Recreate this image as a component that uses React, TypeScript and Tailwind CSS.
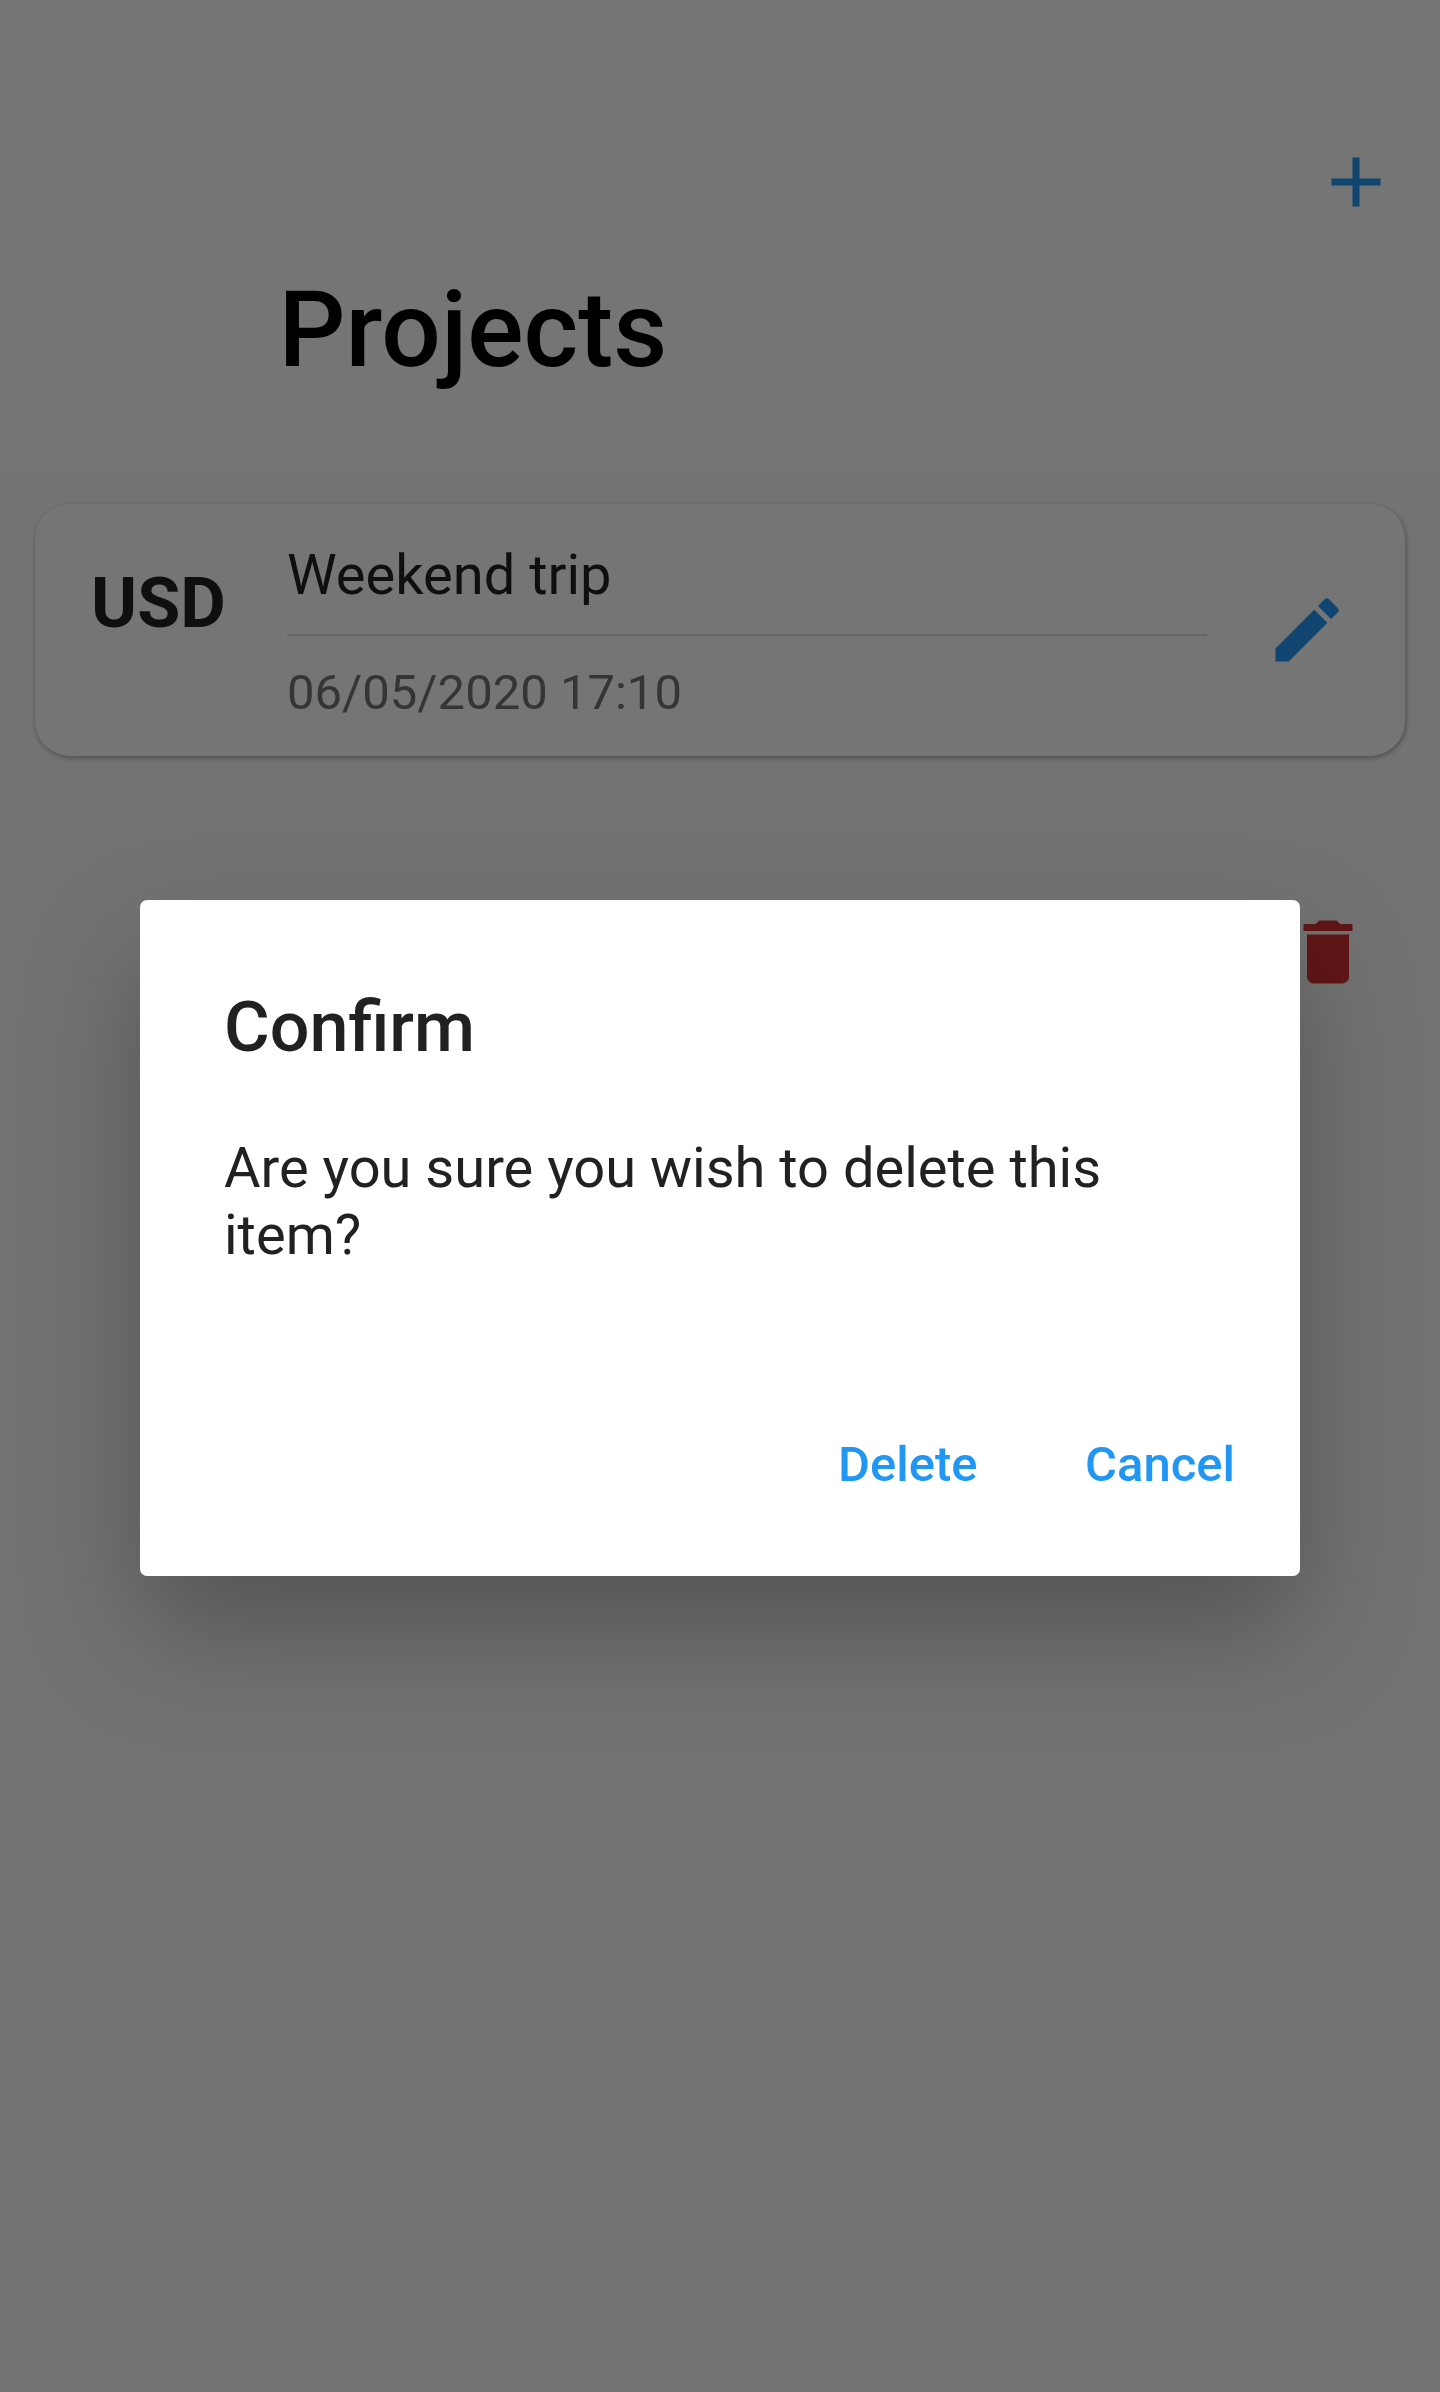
export default function App() {
  return (
    <main className="relative h-[2392px] w-[1440px] overflow-hidden bg-[#737373] font-['Roboto',sans-serif]">
      <header className="flex h-[470px] flex-col bg-[#757575]">
        <div className="flex h-[259px] items-end justify-end pr-[41.7px] pb-[35.4px]">
          <svg className="size-[84px]" viewBox="0 0 24 24" fill="#0f456f"><path d="M19 13h-6v6h-2v-6H5v-2h6V5h2v6h6v2z" /></svg>
        </div>
        <h1 className="pl-[278.5px] text-[105px] leading-[144px] font-medium text-black">Projects</h1>
      </header>
      <section className="mx-[35px] mt-[34px] flex h-[252px] rounded-[35px] bg-[#757575] shadow-[1px_2px_5px_rgba(0,0,0,0.32)]">
        <strong className="w-[252px] pl-[56px] pt-[57px] text-[70px] leading-[84px] font-bold text-[#0f0f0f]">USD</strong>
        <div className="w-[920px]">
          <div className="h-[132px] border-b-2 border-[#676767] pt-[36px] text-[56px] leading-[70px] text-[#0f0f0f]">Weekend trip</div>
          <div className="pt-[26px] text-[49px] leading-[62px] text-[#353535]">06/05/2020 17:10</div>
        </div>
        <svg className="mt-[84px] ml-[58px] size-[84px]" viewBox="0 0 24 24" fill="#0f456f"><path d="M3 17.25V21h3.75L17.81 9.94l-3.75-3.75L3 17.25zM20.71 7.04a1 1 0 0 0 0-1.41l-2.34-2.34a1 1 0 0 0-1.41 0l-1.83 1.83 3.75 3.75 1.83-1.83z" /></svg>
      </section>
      <div className="mt-[154px] flex justify-end pr-[70px]">
        <svg className="size-[84px]" viewBox="0 0 24 24" fill="#611616"><path d="M6 19c0 1.1.9 2 2 2h8c1.1 0 2-.9 2-2V7H6v12zM19 4h-3.5l-1-1h-5l-1 1H5v2h14V4z" /></svg>
      </div>
      <div role="dialog" className="absolute top-[900px] left-[140px] flex h-[676px] w-[1160px] flex-col rounded-[7px] bg-white px-[84px] pt-[85px] text-[#212121] shadow-[0_56px_120px_0px_rgba(0,0,0,0.27)]">
        <h2 className="text-[70px] leading-[84px] font-medium">Confirm</h2>
        <p className="mt-[66px] text-[56px] leading-[67px]">Are you sure you wish to delete this item?</p>
        <div className="mt-[133px] -mr-[19px] flex justify-end gap-[107.5px] text-[49px] leading-[126px] font-medium text-[#2196f3]">
          <button>Delete</button>
          <button>Cancel</button>
        </div>
      </div>
    </main>
  );
}
